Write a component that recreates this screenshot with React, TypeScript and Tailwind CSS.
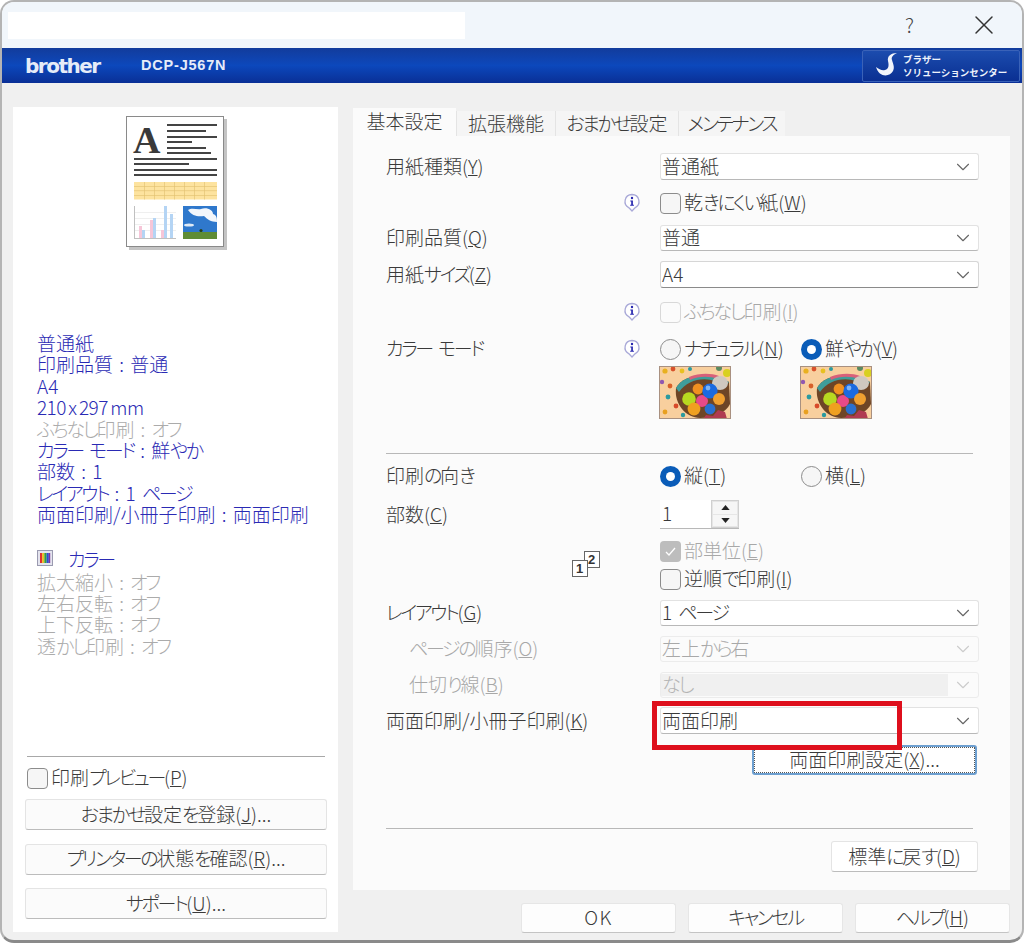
import React from 'react';
import { ChevronDown, X } from 'lucide-react';

// かな部分だけ詰めて表示する（元画面のフォントはかなが狭い）
const J = ({ t, k, dots }: { t: string; k?: string; dots?: boolean }) => {
  const runs = t.match(/[ぁ-ヿ]+|[^ぁ-ヿ]+/g) || [];
  return (
    <span className="inline-block whitespace-nowrap pb-[3px]">
      {runs.map((run, i) =>
        /^[ぁ-ヿ]/.test(run) ? (
          <span key={i} className="tracking-[-2.3px]">
            {run}
          </span>
        ) : (
          <span key={i}>{run}</span>
        )
      )}
      {k && (
        <>
          (<u>{k}</u>)
        </>
      )}
      {dots && '...'}
    </span>
  );
};

const InfoIcon = () => (
  <svg width="18" height="20" viewBox="0 0 18 20" className="shrink-0">
    <path d="M9 1.5a7 7 0 0 1 3 13.3L9 18l-3-3.2A7 7 0 0 1 9 1.5z" fill="#fff" stroke="#a9a9d8" strokeWidth="1.3" />
    <circle cx="9" cy="5" r="1.2" fill="#2626b0" />
    <path d="M7.3 7.4h2.6v4.4h1v1H7.2v-1h1V8.4h-.9z" fill="#2626b0" />
  </svg>
);

const Checkbox = ({ disabled, checked }: { disabled?: boolean; checked?: boolean }) => {
  if (checked) {
    return (
      <span className="flex h-[21px] w-[21px] shrink-0 items-center justify-center rounded-[4px] bg-[#bdbdbd]">
        <svg width="13" height="13" viewBox="0 0 13 13">
          <path d="M2 7l3 3 6-7" fill="none" stroke="#fff" strokeWidth="1.3" />
        </svg>
      </span>
    );
  }
  return (
    <span
      className={
        disabled
          ? 'h-[21px] w-[21px] shrink-0 rounded-[4px] border border-[#d8d8d8] bg-[#fbfbfb]'
          : 'h-[21px] w-[21px] shrink-0 rounded-[4px] border border-[#8c8c8c] bg-[#f6f6f6]'
      }
    />
  );
};

const Radio = ({ on }: { on?: boolean }) =>
  on ? (
    <span className="flex h-[21px] w-[21px] shrink-0 items-center justify-center rounded-full bg-[#0a5cb8]">
      <span className="h-[9px] w-[9px] rounded-full bg-white" />
    </span>
  ) : (
    <span className="h-[21px] w-[21px] shrink-0 rounded-full border border-[#8c8c8c] bg-[#f6f6f6]" />
  );

type SelectProps = {
  value: string;
  disabled?: boolean;
  strong?: boolean;
  shaded?: boolean;
};

const Select = ({ value, disabled, strong, shaded }: SelectProps) => (
  <div
    className={
      strong
        ? 'flex h-full w-[319px] items-center rounded-[3px] border border-[#d6d6d6] border-b-[#8a8a8a] bg-white'
        : disabled
          ? 'flex h-full w-[319px] items-center rounded-[3px] border border-[#ececec] bg-[#fbfbfb]'
          : 'flex h-full w-[319px] items-center rounded-[3px] border border-[#e2e2e2] border-b-[#b8b8b8] bg-white'
    }
  >
    <span
      className={
        shaded
          ? 'flex h-[22px] flex-1 items-center bg-[#f0f0f0] pl-[1px] text-[#b4b4b4]'
          : disabled
            ? 'flex-1 pl-[1px] text-[#a8a8a8]'
            : 'flex-1 pl-[1px] text-[#3a3a3a]'
      }
    >
      <J t={value} />
    </span>
    <span className="flex w-[30px] justify-center">
      <ChevronDown size={22} strokeWidth={1.2} color={disabled ? '#cccccc' : '#666'} />
    </span>
  </div>
);

const Label = ({ children, sub, info }: { children?: React.ReactNode; sub?: boolean; info?: boolean }) => (
  <div className="flex w-[274px] shrink-0 items-center justify-between pr-[19px]">
    <span className={sub ? 'pl-[23px] text-[#a8a8a8]' : ''}>{children}</span>
    {info && <InfoIcon />}
  </div>
);

const EggPhoto = () => (
  <svg width="72" height="53" viewBox="0 0 72 53" className="blur-[0.3px]">
    <rect width="72" height="53" fill="#f8cf9e" />
    <circle cx="6" cy="5" r="2.6" fill="#e8b020" />
    <circle cx="14" cy="3" r="2.4" fill="#d8502a" />
    <circle cx="23" cy="5" r="2.4" fill="#e8c020" />
    <circle cx="31" cy="3" r="2" fill="#2a9aa0" />
    <circle cx="3" cy="16" r="2.2" fill="#9058b0" />
    <circle cx="11" cy="20" r="2.4" fill="#d8602a" />
    <circle cx="9" cy="31" r="2.4" fill="#2a9aa0" />
    <circle cx="17" cy="40" r="2.4" fill="#d84a2a" />
    <circle cx="6" cy="46" r="2.4" fill="#e8a020" />
    <circle cx="24" cy="49" r="2.2" fill="#2a9aa0" />
    <circle cx="68" cy="7" r="4" fill="#d8d020" />
    <circle cx="60" cy="2" r="3" fill="#5a8a60" />
    <path d="M17 22C24 8 52 4 70 16l1 22c-4 8-14 14-30 14-14 0-26-14-24-30z" fill="#6e4526" />
    <path d="M17 22C24 8 52 4 70 16l-3 4C50 9 30 12 20 26z" fill="#3f9d9a" />
    <path d="M30 11c10-4 22-4 30-1l-1 3c-9-3-19-3-28 1z" fill="#d8607a" />
    <ellipse cx="61" cy="17" rx="8" ry="7" fill="#cfc8c0" />
    <circle cx="30" cy="33" r="6.8" fill="#b8d820" />
    <circle cx="39" cy="23" r="5.4" fill="#f09020" />
    <circle cx="43" cy="35" r="6" fill="#e84a88" />
    <circle cx="51" cy="25" r="7.6" fill="#1a6ae0" />
    <circle cx="49" cy="22" r="2.4" fill="#7fb4f4" />
    <circle cx="60" cy="33" r="6" fill="#f0a030" />
    <circle cx="35" cy="43" r="6.4" fill="#f0a020" />
    <circle cx="51" cy="43" r="5.4" fill="#2a70d0" />
    <path d="M44 53l3-4 7 1 5-6 7 2 2 7z" fill="#b03a50" />
    <rect x="0.5" y="0.5" width="71" height="52" fill="none" stroke="#a89080" />
  </svg>
);

const DocumentPreview = () => {
  const shortLines = [
    [8, 50],
    [14, 39],
    [20, 50],
    [25, 25],
    [31, 39],
    [36, 44],
  ];
  const longLines = [
    [42, 83],
    [47, 55],
    [53, 83],
    [58, 83],
  ];
  return (
    <svg width="104" height="136" viewBox="0 0 104 136" className="ml-[113px] block shrink-0">
      <rect x="3" y="3" width="98" height="131" fill="#c4c4c4" />
      <rect x="0.5" y="0.5" width="97" height="130" fill="#fff" stroke="#8a8a8a" />
      <text x="7" y="37" fontFamily="'Liberation Serif', serif" fontWeight="700" fontSize="38" fill="#3a3a3a">
        A
      </text>
      {shortLines.map(([y, w]) => (
        <rect key={y} x="41" y={y} width={w} height="2" fill="#444" />
      ))}
      {longLines.map(([y, w]) => (
        <rect key={y} x="8" y={y} width={w} height="2" fill="#444" />
      ))}
      <rect x="8" y="66" width="83" height="17.5" fill="#fde39f" />
      {[70, 74.5, 79].map(y => (
        <rect key={y} x="8" y={y} width="83" height="0.6" fill="#e2c070" />
      ))}
      {[18, 28, 38, 48, 58, 68, 78].map(x => (
        <rect key={x} x={x} y="66" width="0.6" height="17.5" fill="#e2c070" />
      ))}
      {[96, 102, 108, 114].map(y => (
        <rect key={y} x="8" y={y} width="42" height="0.6" fill="#e4e4e4" />
      ))}
      <rect x="8" y="90" width="1" height="33" fill="#c0c0c0" />
      <rect x="8" y="122" width="42" height="1" fill="#c0c0c0" />
      <rect x="13" y="110" width="3" height="12" fill="#f6c6d8" />
      <rect x="16" y="114" width="3" height="8" fill="#b4d4f4" />
      <rect x="24" y="104" width="3" height="18" fill="#f6c6d8" />
      <rect x="27" y="102" width="3" height="20" fill="#b4d4f4" />
      <rect x="35" y="114" width="3" height="8" fill="#f6c6d8" />
      <rect x="38" y="90" width="3" height="32" fill="#b4d4f4" />
      <rect x="44" y="98" width="3" height="24" fill="#b4d4f4" />
      <rect x="57" y="90" width="34" height="33" fill="#2f78cc" />
      <path d="M62 94c4-3 9 0 13-1 6-2 12 1 12 5 4 1 4 5 4 8-6 0-10-3-13-6-6 1-12 0-16-6z" fill="#f2f6fb" />
      <ellipse cx="63" cy="109" rx="5" ry="1.6" fill="#dfeaf6" />
      <rect x="57" y="116" width="34" height="7" fill="#5f8c35" />
      <circle cx="75" cy="114.5" r="1.6" fill="#24401c" />
    </svg>
  );
};

const summaryLines: [string, boolean][] = [
  ['普通紙', true],
  ['印刷品質 : 普通', true],
  ['A4', true],
  ['210 x 297 mm', true],
  ['ふちなし印刷 : オフ', false],
  ['カラー モード : 鮮やか', true],
  ['部数 : 1', true],
  ['レイアウト : 1 ページ', true],
  ['両面印刷/小冊子印刷 : 両面印刷', true],
];

const optionLines = ['拡大縮小 : オフ', '左右反転 : オフ', '上下反転 : オフ', '透かし印刷 : オフ'];

const SideButton = ({ children }: { children: React.ReactNode }) => (
  <div className="flex h-[31px] w-[302px] items-center justify-center rounded-[3px] border border-[#e4e4e4] border-b-[#bcbcbc] bg-[#fbfbfb]">
    {children}
  </div>
);

const FooterButton = ({ children }: { children: React.ReactNode }) => (
  <div className="flex h-[30px] w-[155px] items-center justify-center rounded-[3px] border border-[#e6e6e6] border-b-[#c4c4c4] bg-[#fdfdfd]">
    {children}
  </div>
);

export default function App() {
  return (
    <div className="relative h-[946px] w-[1024px] overflow-hidden bg-white text-[19px] leading-none text-[#3a3a3a] font-['Noto_Sans_CJK_JP',sans-serif] font-light [font-feature-settings:'palt'] [word-spacing:2px]">
      <div className="flex h-[943px] w-[1024px] flex-col overflow-hidden rounded-[14px] border-2 border-b-[3px] border-[#b4b4b4] border-b-[#8a8a8a] bg-[#f0f0f0]">
        {/* タイトルバー */}
        <div className="flex h-[46px] shrink-0 items-center bg-[#f1f6fb] pl-[6px]">
          <div className="h-[27px] w-[457px] bg-white" />
          <span className="ml-[440px] text-[20px] text-[#444]">?</span>
          <X size={32} strokeWidth={1.1} color="#333" className="ml-[54px]" />
        </div>

        {/* ブラザーの帯 */}
        <div className="flex h-[35px] shrink-0 items-center bg-gradient-to-b from-[#123c9c] via-[#0c48bc] to-[#0a2f96] pl-[23px] pr-[2px]">
          <span className="w-[116px] font-['DejaVu_Sans',sans-serif] text-[20px] font-bold tracking-[-1.5px] text-[#e6ecf8]">
            brother
          </span>
          <span className="font-['Liberation_Sans',sans-serif] text-[14.5px] font-bold tracking-[0.8px] text-[#e6ecf8]">
            DCP-J567N
          </span>
          <div className="ml-auto flex h-[32px] w-[158px] items-center rounded-[2px] border border-[#3a62b8] bg-gradient-to-b from-[#1c4cae] to-[#0a2f92] pl-[13px]">
            <svg width="22" height="25" viewBox="0 0 22 25" className="shrink-0">
              <path d="M0 14C3 16 6 18 9 17C13 16 13 12 12 8C11 3 15 0 21 0C17 2 15 4 16 7C17 11 19 14 17 18C14 24 3 25 0 14z" fill="#f2f5fb" />
            </svg>
            <div className="ml-[5px] flex flex-col gap-[3px] text-[9.5px] font-bold leading-[10px] text-[#eef2fb] [font-feature-settings:normal]">
              <span>ブラザー</span>
              <span>ソリューションセンター</span>
            </div>
          </div>
        </div>

        {/* 本体 */}
        <div className="flex flex-1 gap-[15px] pl-[11px] pt-[24px]">
          {/* 左パネル */}
          <div className="flex h-[825px] w-[325px] shrink-0 flex-col bg-white pt-[9px] text-[#3a3a3a]">
            <DocumentPreview />
            <div className="ml-[24px] mt-[80px] flex flex-col text-[#2a2ab4]">
              {summaryLines.map(([text, active]) => (
                <span
                  key={text}
                  className={
                    !active
                      ? 'h-[21.4px] leading-[21px] text-[#ababab]'
                      : text.startsWith('210')
                        ? 'h-[21.4px] leading-[21px] tracking-[-0.6px] [word-spacing:-1px]'
                        : 'h-[21.4px] leading-[21px]'
                  }
                >
                  <J t={text} />
                </span>
              ))}
            </div>
            <div className="ml-[24px] mt-[25px] flex h-[21px] items-center text-[#2a2ab4]">
              <svg width="16" height="16" viewBox="0 0 16 16" className="mb-[4px]">
                <rect x="0.5" y="0.5" width="15" height="15" fill="#e4e4ee" stroke="#9a9ab0" />
                <rect x="3" y="3" width="2.2" height="10" fill="#e03030" />
                <rect x="5.2" y="3" width="2.2" height="10" fill="#e8c020" />
                <rect x="7.4" y="3" width="2.2" height="10" fill="#30a040" />
                <rect x="9.6" y="3" width="2.2" height="10" fill="#2a50d0" />
                <rect x="11.8" y="3" width="1.4" height="10" fill="#8030a0" />
              </svg>
              <span className="ml-[15px]">
                <J t="カラー" />
              </span>
            </div>
            <div className="ml-[24px] flex flex-col text-[#ababab]">
              {optionLines.map(text => (
                <span key={text} className="h-[21.4px] leading-[21px]">
                  <J t={text} />
                </span>
              ))}
            </div>
            <div className="ml-[14px] mt-auto h-px w-[298px] shrink-0 bg-[#a8a8a8]" />
            <div className="ml-[14px] mt-[10px] flex items-center gap-[3px]">
              <Checkbox />
              <J t="印刷プレビュー" k="P" />
            </div>
            <div className="ml-[12px] mt-[10px] flex flex-col gap-[13.5px] pb-[13px]">
              <SideButton>
                <J t="おまかせ設定を登録" k="J" dots />
              </SideButton>
              <SideButton>
                <J t="プリンターの状態を確認" k="R" dots />
              </SideButton>
              <SideButton>
                <J t="サポート" k="U" dots />
              </SideButton>
            </div>
          </div>

          {/* 右パネル */}
          <div className="flex w-[657px] shrink-0 flex-col">
            <div className="flex h-[29px] shrink-0 items-end pt-[1px]">
              <div className="flex h-[28px] w-[103px] items-center justify-center bg-[#fbfbfb]">
                <J t="基本設定" />
              </div>
              <div className="flex h-[25px] w-[99px] items-center justify-center border-l border-[#e4e4e4] bg-[#f5f5f5]">
                <J t="拡張機能" />
              </div>
              <div className="flex h-[25px] w-[123px] items-center justify-center border-l border-[#e4e4e4] bg-[#f5f5f5]">
                <J t="おまかせ設定" />
              </div>
              <div className="flex h-[25px] w-[107px] items-center justify-center border-l border-[#e4e4e4] bg-[#f5f5f5]">
                <J t="メンテナンス" />
              </div>
            </div>
            <div className="flex h-[754px] shrink-0 flex-col bg-[#fbfbfb] pl-[33px] pt-[17px]">
              <div className="flex h-[27px]">
                <Label>
                  <J t="用紙種類" k="Y" />
                </Label>
                <Select value="普通紙" />
              </div>
              <div className="mt-[11px] flex h-[24px]">
                <Label info />
                <div className="flex items-center gap-[3px]">
                  <Checkbox />
                  <J t="乾きにくい紙" k="W" />
                </div>
              </div>
              <div className="mt-[10px] flex h-[26px]">
                <Label>
                  <J t="印刷品質" k="Q" />
                </Label>
                <Select value="普通" />
              </div>
              <div className="mt-[10px] flex h-[27px]">
                <Label>
                  <J t="用紙サイズ" k="Z" />
                </Label>
                <Select value="A4" strong />
              </div>
              <div className="mt-[12px] flex h-[24px]">
                <Label info />
                <div className="flex items-center gap-[3px] text-[#a8a8a8]">
                  <Checkbox disabled />
                  <J t="ふちなし印刷" k="I" />
                </div>
              </div>
              <div className="mt-[13px] flex h-[24px]">
                <Label info>
                  <J t="カラー モード" />
                </Label>
                <div className="flex w-[141px] items-center gap-[3px]">
                  <Radio />
                  <J t="ナチュラル" k="N" />
                </div>
                <div className="flex items-center gap-[3px]">
                  <Radio on />
                  <J t="鮮やか" k="V" />
                </div>
              </div>
              <div className="ml-[273px] mt-[5px] flex h-[53px] gap-[69px]">
                <EggPhoto />
                <EggPhoto />
              </div>

              <div className="mt-[34px] h-px w-[587px] shrink-0 bg-[#b8b8b8]" />

              <div className="mt-[10px] flex h-[24px]">
                <Label>
                  <J t="印刷の向き" />
                </Label>
                <div className="flex w-[141px] items-center gap-[3px]">
                  <Radio on />
                  <J t="縦" k="T" />
                </div>
                <div className="flex items-center gap-[3px]">
                  <Radio />
                  <J t="横" k="L" />
                </div>
              </div>
              <div className="mt-[12px] flex h-[29px]">
                <Label>
                  <J t="部数" k="C" />
                </Label>
                <div className="flex h-full w-[79px] border-b border-[#b8b8b8]">
                  <div className="flex flex-1 items-center bg-white pl-[2px]">
                    <J t="1" />
                  </div>
                  <div className="flex w-[28px] flex-col gap-[1px] border border-[#d0d0d0] bg-[#e6e6e6] p-[1px]">
                    <div className="flex flex-1 items-center justify-center bg-[#f6f6f6]">
                      <svg width="9" height="5" viewBox="0 0 10 6">
                        <path d="M5 0l5 6H0z" fill="#222" />
                      </svg>
                    </div>
                    <div className="flex flex-1 items-center justify-center bg-[#f6f6f6]">
                      <svg width="9" height="5" viewBox="0 0 10 6">
                        <path d="M0 0h10L5 6z" fill="#222" />
                      </svg>
                    </div>
                  </div>
                </div>
              </div>
              <div className="mt-[10px] flex h-[52px]">
                <div className="w-[274px] shrink-0 pl-[185px] pt-[12px]">
                  <svg width="30" height="27" viewBox="0 0 30 27">
                    <rect x="13.5" y="0.5" width="15" height="16" fill="#fff" stroke="#666" />
                    <rect x="1.5" y="9.5" width="15" height="16" fill="#fff" stroke="#666" />
                    <text x="17" y="13" fontFamily="'Liberation Sans', sans-serif" fontWeight="700" fontSize="13" fill="#333">
                      2
                    </text>
                    <text x="5" y="22" fontFamily="'Liberation Sans', sans-serif" fontWeight="700" fontSize="13" fill="#333">
                      1
                    </text>
                  </svg>
                </div>
                <div className="flex flex-col gap-[4px]">
                  <div className="flex h-[24px] items-center gap-[3px] text-[#a8a8a8]">
                    <Checkbox checked />
                    <J t="部単位" k="E" />
                  </div>
                  <div className="flex h-[24px] items-center gap-[3px]">
                    <Checkbox />
                    <J t="逆順で印刷" k="I" />
                  </div>
                </div>
              </div>
              <div className="mt-[9px] flex h-[26px]">
                <Label>
                  <J t="レイアウト" k="G" />
                </Label>
                <Select value="1 ページ" />
              </div>
              <div className="mt-[10px] flex h-[26px]">
                <Label sub>
                  <J t="ページの順序" k="O" />
                </Label>
                <Select value="左上から右" disabled />
              </div>
              <div className="mt-[10px] flex h-[26px]">
                <Label sub>
                  <J t="仕切り線" k="B" />
                </Label>
                <Select value="なし" disabled shaded />
              </div>
              <div className="mt-[9px] flex h-[27px]">
                <Label>
                  <J t="両面印刷/小冊子印刷" k="K" />
                </Label>
                <Select value="両面印刷" />
              </div>
              <div className="ml-[366px] mt-[11px] flex h-[30px] w-[225px] items-center justify-center rounded-[3px] border-2 border-[#6d9fd0] bg-white outline-1 -outline-offset-3 outline-dotted outline-[#555]">
                <span className="relative z-10">
                  <J t="両面印刷設定" k="X" dots />
                </span>
              </div>

              <div className="mt-[53px] h-px w-[587px] shrink-0 bg-[#b8b8b8]" />

              <div className="ml-[445px] mt-[12px] flex h-[31px] w-[147px] items-center justify-center rounded-[3px] border border-[#e4e4e4] border-b-[#bcbcbc] bg-white">
                <J t="標準に戻す" k="D" />
              </div>
            </div>
            <div className="mt-[13px] flex justify-end gap-[12px]">
              <FooterButton>
                <span className="tracking-[1.5px]">
                  <J t="OK" />
                </span>
              </FooterButton>
              <FooterButton>
                <J t="キャンセル" />
              </FooterButton>
              <FooterButton>
                <J t="ヘルプ" k="H" />
              </FooterButton>
            </div>
          </div>
        </div>
      </div>

      {/* 赤枠の注釈 */}
      <div className="absolute left-[652px] top-[701px] h-[49px] w-[250px] border-[5px] border-[#de0f1c]" />
    </div>
  );
}
